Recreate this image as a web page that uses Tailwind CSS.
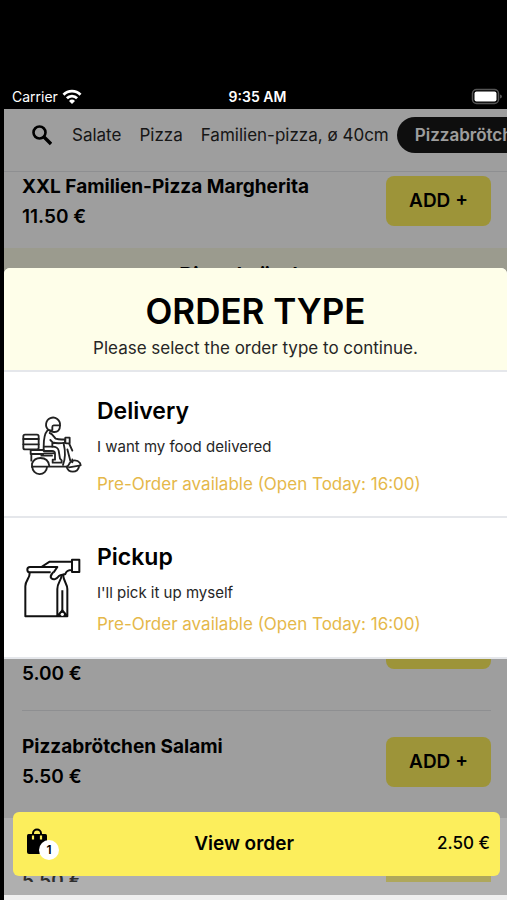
<!DOCTYPE html>
<html lang="de">
<head>
  <meta charset="UTF-8">
  <meta name="viewport" content="width=device-width, initial-scale=1.0">
  <title>Order Type</title>
  <script src="https://cdn.jsdelivr.net/npm/@tailwindcss/browser@4"></script>
</head>
<body class="h-screen flex flex-col overflow-hidden bg-black pl-1 font-['Inter',sans-serif] text-black">

  <!-- Status bar -->
  <div class="h-[109px] shrink-0 grid grid-cols-3 items-end pl-2 pr-1 text-white text-sm leading-6">
    <div class="flex items-center gap-1">
      <span>Carrier</span>
      <svg class="w-5 h-4" viewBox="0 0 20 16" fill="none" stroke="white" stroke-width="2.8">
        <path d="M1.5 5.7a12 12 0 0 1 17 0"/>
        <path d="M4.9 9.3a7.2 7.2 0 0 1 10.2 0"/>
        <path d="M10 15 7 11.9a4.3 4.3 0 0 1 6 0Z" fill="white" stroke="none"/>
      </svg>
    </div>
    <span class="text-center font-semibold">9:35 AM</span>
    <svg class="w-8 h-6 justify-self-end" viewBox="0 0 32 24">
      <rect x="1.5" y="4.5" width="26" height="14" rx="4" fill="none" stroke="#555" stroke-width="1.5"/>
      <rect x="3.5" y="6.5" width="22" height="10" rx="2" fill="white"/>
      <path d="M29 9.5v4q2-.6 2-2t-2-2Z" fill="#555"/>
    </svg>
  </div>

  <div class="relative flex-1 min-h-0 flex flex-col bg-white pb-[18px]">

    <!-- Categories -->
    <nav class="h-[63px] shrink-0 flex items-start gap-[18px] overflow-hidden border-b border-gray-200 pt-2 pl-7 text-[17px] leading-9 whitespace-nowrap text-neutral-800">
      <button type="button" aria-label="Search" class="mr-0.5 h-9 shrink-0">
        <svg class="w-5 h-9" viewBox="0 0 20 36" fill="none" stroke="black" stroke-width="2.6">
          <circle cx="7.5" cy="15.5" r="6"/>
          <path d="m12 20 7 7" stroke-width="3.4"/>
        </svg>
      </button>
      <a href="#salate">Salate</a>
      <a href="#pizza">Pizza</a>
      <a href="#familien-pizza">Familien-pizza, ø 40cm</a>
      <a href="#pizzabroetchen" class="-ml-2.5 rounded-full bg-neutral-900 px-[18px] font-semibold text-white">Pizzabrötchen</a>
    </nav>

    <!-- Menu -->
    <main class="flex-1 min-h-0 overflow-hidden text-[19px] leading-[30px] font-semibold">
      <div class="flex items-start justify-between h-[76px] pl-[18px] pr-4">
        <div>
          <h3 class="font-bold">XXL Familien-Pizza Margherita</h3>
          <p>11.50 €</p>
        </div>
        <button type="button" class="mt-1 h-[50px] w-[105px] rounded-lg bg-[#feef5c]">ADD +</button>
      </div>

      <h2 id="pizzabroetchen" class="h-[60px] bg-[#fbfae6] text-center text-[22px] leading-[54px]">Pizzabrötchen</h2>

      <div class="pl-[18px] pr-4">
        <div class="flex items-center justify-between h-[134px]">
          <p>3.50 €</p>
          <button type="button" class="h-[50px] w-[105px] rounded-lg bg-[#feef5c]" aria-label="Add"></button>
        </div>
        <div class="flex items-center justify-between h-[134px] border-t border-gray-200">
          <p>4.00 €</p>
          <button type="button" class="h-[50px] w-[105px] rounded-lg bg-[#feef5c]" aria-label="Add"></button>
        </div>
        <div class="flex items-center justify-between h-[134px] border-t border-gray-200">
          <p class="pt-[60px]">5.00 €</p>
          <button type="button" class="h-[50px] w-[105px] rounded-lg bg-[#feef5c]" aria-label="Add"></button>
        </div>
        <div class="flex items-center justify-between h-[102px] border-t border-gray-200">
          <div><h3 class="font-bold">Pizzabrötchen Salami</h3><p>5.50 €</p></div>
          <button type="button" class="h-[50px] w-[105px] rounded-lg bg-[#feef5c]">ADD +</button>
        </div>
        <div class="flex items-center justify-between h-[102px] border-t border-gray-200">
          <p class="pt-[34px]">5.50 €</p>
          <button type="button" class="h-[50px] w-[105px] rounded-lg bg-[#feef5c]" aria-label="Add"></button>
        </div>
      </div>
    </main>

    <!-- Order type dialog -->
    <div class="absolute inset-0 flex items-center bg-black/38 pb-[82px]">
      <div role="dialog" aria-labelledby="order-type-title" class="w-full overflow-hidden rounded-t-md border-b-2 border-gray-200 bg-white">
        <div class="bg-[#fefee9] pt-5 pb-2 text-center">
          <h1 id="order-type-title" class="text-[35px] leading-[46px] font-semibold">ORDER TYPE</h1>
          <p class="text-[17px] leading-7 text-neutral-800">Please select the order type to continue.</p>
        </div>
        <button type="button" class="flex w-full items-center gap-[11px] border-t-2 border-gray-200 pt-[23px] pb-5 pl-3.5 text-left">
          <svg class="w-[68px] h-[68px] shrink-0" viewBox="0 0 204 204" fill="none" stroke="#222" stroke-width="5.5" stroke-linejoin="round" stroke-linecap="round">
            <!-- box -->
            <rect x="16" y="68" width="46" height="44" rx="5"/>
            <path d="M16 81h46M16 97h46"/>
            <!-- rider -->
            <path d="M92 54a21 21 0 1 1 34-14h-19q-4 0-4 5v9q-6 3-11 0"/>
            <path d="M126 41c0 14-7 20-19 19q-9-1-15-6"/>
            <path d="M88 56C77 68 77 86 77 104h26c10 0 17 3 19 12l4 24 5 5v7h-27v-9h7v-18c0-6-3-8-9-8H77v-12"/>
            <path d="M95 63c8 2 13 12 18 17 9 3 18 3 29 2v10c-14 2-28 3-38-1l-7-7M103 92v12"/>
            <!-- scooter -->
            <path d="M142 77h13v17h-10q-4 0-4-6ZM137 95c5 20 6 42-2 64M154 96l9 20M148 112l9 34"/>
            <path d="M38 114h39M38 114v12h37v5M40 126v20M78 124h28M70 131h32"/>
            <path d="M42 165V155c5-13 15-17 25-17 15 0 25 9 27 24M42 164h103c7 0 7-7 11-12 6-8 21-10 30 1l2 7-35 6"/>
            <path d="M43 164a22 22 0 0 0 44 1M146 164a19 19 0 0 0 37 0M163 142v9"/>
          </svg>
          <span class="block">
            <span class="block text-[23px] leading-8 font-semibold">Delivery</span>
            <span class="mt-2 block text-[15px] leading-6 text-neutral-800">I want my food delivered</span>
            <span class="mt-[13px] block text-[17px] leading-6 text-[#e5b84a]">Pre-Order available (Open Today: 16:00)</span>
          </span>
        </button>
        <button type="button" class="flex w-full items-center gap-[11px] border-t-2 border-gray-200 pt-[23px] pb-[21px] pl-3.5 text-left">
          <svg class="w-[68px] h-[68px] shrink-0" viewBox="0 6 204 204" fill="none" stroke="#111" stroke-width="6" stroke-linejoin="round">
            <!-- bag -->
            <path d="M98 58H36q-8 0-8-8t8-8h82l-11 16M35 60c1 17-13 21-13 40v90h126v-82c0-15-11-22-13-43"/>
            <path d="M131 66c-1 17-13 23-13 42v82M133 112v64"/>
            <path d="M119 188l14-16 14 16Z" fill="#111"/>
            <circle cx="133" cy="184" r="5" fill="white" stroke="none"/>
            <!-- hand -->
            <path d="M70 42l25-16h67v25c-15 0-18 5-20 12-7 3-13 1-18 5-9 11-17 14-24 8-5-5-1-10 6-19"/>
            <rect x="162" y="20" width="22" height="37"/>
          </svg>
          <span class="block">
            <span class="block text-[23px] leading-8 font-semibold">Pickup</span>
            <span class="mt-2 block text-[15px] leading-6 text-neutral-800">I'll pick it up myself</span>
            <span class="mt-[7px] block text-[17px] leading-6 text-[#e5b84a]">Pre-Order available (Open Today: 16:00)</span>
          </span>
        </button>
      </div>
    </div>

    <!-- Cart -->
    <div class="absolute inset-x-0 bottom-0 h-[82px] border-b-[5px] border-[#efefef] bg-white/18 pl-[9px] pr-[7px]">
      <button type="button" class="-mt-1.5 flex h-16 w-full items-center rounded-md bg-[#fcee5c] pl-3.5 pr-2.5">
        <span class="relative w-8 h-8">
          <svg class="w-5 h-[26px]" viewBox="0 0 20 26">
            <path d="M6 8V5.5a4 4 0 0 1 8 0V8" fill="none" stroke="black" stroke-width="2"/>
            <path d="M1.5 6h17q1.500 0 1.500 1.500V24q0 2-2 2H2q-2 0-2-2V7.500Q0 6 1.500 6Z"/>
            <path d="M6 7.500v4M14 7.500v4" stroke="#fcee5c" stroke-width="2.200"/>
          </svg>
          <span class="absolute right-0 bottom-0 w-5 h-5 rounded-full bg-white text-center text-xs leading-5 font-semibold">1</span>
        </span>
        <span class="flex-1 pr-2 text-center text-[19px] font-semibold whitespace-nowrap">View order</span>
        <span class="text-right text-[17px] font-medium">2.50 €</span>
      </button>
    </div>
  </div>

</body>
</html>
